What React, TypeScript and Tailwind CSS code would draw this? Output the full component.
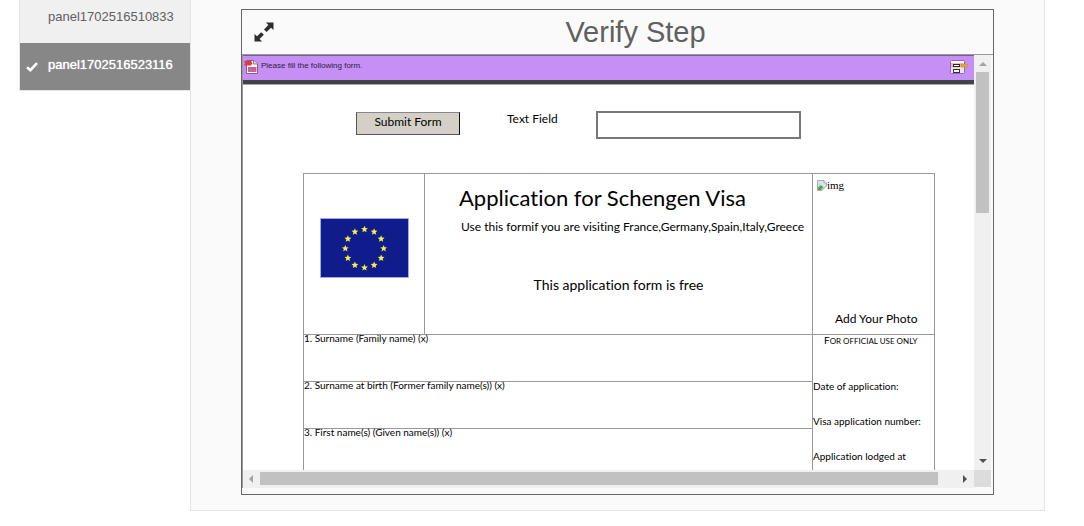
const formFont = "font-['Lato','Open_Sans',sans-serif] [font-variant-ligatures:none]";

const panels = [
  { id: 'panel1702516510833', active: false },
  { id: 'panel1702516523116', active: true },
];

const questions = [
  '1. Surname (Family name) (x)',
  '2. Surname at birth (Former family name(s)) (x)',
  '3. First name(s) (Given name(s)) (x)',
];

const officialFields = ['Date of application:', 'Visa application number:', 'Application lodged at'];

function starPoints(cx: number, cy: number, r: number) {
  return Array.from({ length: 10 }, (_, i) => {
    const radius = i % 2 === 0 ? r : r * 0.45;
    const angle = (Math.PI / 5) * i - Math.PI / 2;
    return `${(cx + radius * Math.cos(angle)).toFixed(2)},${(cy + radius * Math.sin(angle)).toFixed(2)}`;
  }).join(' ');
}

function EuFlag() {
  return (
    <svg viewBox="0 0 89 60" className="h-[60px] w-[89px]" role="img" aria-label="European Union flag">
      <rect x="0.5" y="0.5" width="88" height="59" fill="#111c8c" stroke="#a4aae6" />
      {Array.from({ length: 12 }, (_, i) => {
        const a = (Math.PI / 6) * i;
        return (
          <polygon key={i} points={starPoints(44.5 + 19.2 * Math.sin(a), 30.5 - 19.2 * Math.cos(a), 3.6)} fill="#f4f04a" />
        );
      })}
    </svg>
  );
}

function ExpandIcon() {
  return (
    <svg viewBox="0 0 20 20" className="size-5" fill="#2e2e2e" aria-hidden="true">
      <path d="M12 0.5H19.5V8L17 5.8L12.6 10L10 7.4L14.4 3Z" />
      <path d="M0.5 12L3 14.2L7.2 10.2L9.8 12.8L5.6 17L8 19.5H0.5Z" />
    </svg>
  );
}

function CheckIcon() {
  return (
    <svg viewBox="0 0 12 10" className="h-[10px] w-3" fill="none" stroke="#fff" strokeWidth="2.6" aria-hidden="true">
      <path d="M1 5.2L4.4 8.2L11 1.2" />
    </svg>
  );
}

function PdfIcon() {
  return (
    <svg viewBox="0 0 15 15" className="size-[15px] shrink-0" aria-hidden="true">
      <path d="M2.5 1.5H10L13.5 5V14.5H2.5Z" fill="#fbf3fb" stroke="#86607c" />
      <path d="M9.5 1.5V5H13.5" fill="#e3dbe8" stroke="#86607c" strokeWidth="0.8" />
      <path d="M0 2H7L8.5 4.3L7 6.5H0L1 4.2Z" fill="#dc3c48" />
      <rect x="4.5" y="8.5" width="7.5" height="4" fill="#d0609c" stroke="#b04a80" strokeWidth="0.7" />
    </svg>
  );
}

function HighlightFieldsIcon() {
  return (
    <svg viewBox="0 0 18 16" className="h-4 w-[18px]" aria-hidden="true">
      <rect x="0.5" y="1.5" width="14" height="13" rx="1" fill="#ece4f2" stroke="#9a63b8" />
      <rect x="1" y="2" width="13" height="2.5" fill="#fff" />
      <rect x="1" y="4" width="12" height="4.5" fill="#eeb4bc" />
      <rect x="3.5" y="5.5" width="6" height="2" fill="#fff" stroke="#3a2228" />
      <rect x="3.5" y="10.5" width="6" height="3" fill="#fff" stroke="#333" />
      <rect x="11" y="5" width="6.5" height="3" rx="1" fill="#e5a62e" stroke="#c9852a" strokeWidth="0.5" />
    </svg>
  );
}

function BrokenImage() {
  return (
    <svg viewBox="0 0 10 11" className="h-[11px] w-[10px]" aria-hidden="true">
      <path d="M0.5 0.5H7L9.5 3V6L5 10.5H0.5Z" fill="#d3e3f5" stroke="#a9a9a9" />
      <path d="M1 10V7.5L3.5 5L6.5 7L4 10Z" fill="#55a24a" />
      <path d="M7 0.5V3H9.5" fill="#fff" stroke="#a9a9a9" />
    </svg>
  );
}

function Arrow({ className, d, fill }: { className: string; d: string; fill: string }) {
  return (
    <svg viewBox="0 0 8 8" className={className} fill={fill} aria-hidden="true">
      <path d={d} />
    </svg>
  );
}

export default function App() {
  return (
    <div className="flex h-screen bg-white pb-[15px] pl-[19px] pr-[39px] font-['Liberation_Sans',Arial,sans-serif]">
      <nav className="w-[171px] shrink-0">
        <ul className="border-b border-l border-[#e4e4e4]">
          {panels.map((p) =>
            p.active ? (
              <li key={p.id}>
                <a href="#verify" aria-current="step" className="flex h-[47px] items-center bg-[#878787] pb-1 pl-[6px] text-[13px] text-white">
                  <span className="w-[22px] shrink-0 pt-1">
                    <CheckIcon />
                  </span>
                  <span className="[text-shadow:0_0_1px_#fff]">{p.id}</span>
                </a>
              </li>
            ) : (
              <li key={p.id}>
                <a href="#details" className="flex h-[43px] items-center bg-[#f0f0f0] pb-[10px] pl-7 text-[13px] text-[#606060]">
                  {p.id}
                </a>
              </li>
            ),
          )}
        </ul>
      </nav>

      <main className="flex min-w-0 grow flex-col border-x border-b border-[#e4e4e4] bg-[#fafafa] px-[50px] pb-[15px] pt-[9px]">
        <section className="flex min-h-0 grow flex-col border border-[#666]">
          <header className="flex h-[45px] shrink-0 items-center border-b border-[#999] pl-3">
            <button type="button" aria-label="Toggle full screen" className="w-6 shrink-0">
              <ExpandIcon />
            </button>
            <h1 className="grow text-center text-[29px] leading-[44px] text-[#606060]">Verify Step</h1>
          </header>

          <div className="mb-[6px] mr-[2px] grid min-h-0 grow grid-cols-[minmax(0,1fr)_17px] grid-rows-[minmax(0,1fr)_18px] border-l border-[#999]">
            <div className="flex flex-col overflow-hidden bg-white">
              <div className="flex h-[29px] shrink-0 items-start justify-between border-b-4 border-t border-b-[#454247] border-t-[#75608a] bg-[#c68ff5] pl-px pr-[6px] pt-[3px] shadow-[0_1px_0_#aaa]">
                <div className="flex gap-[2px]">
                  <PdfIcon />
                  <p className="text-[8px] leading-[13px] text-[#302040]">Please fill the following form.</p>
                </div>
                <button type="button" aria-label="Highlight existing fields" className="flex">
                  <HighlightFieldsIcon />
                </button>
              </div>

              <form className={`pl-[60px] pr-[39px] text-black ${formFont}`}>
                <div className="flex items-start pl-[53px] pt-[27px]">
                  <button
                    type="button"
                    className="mt-px h-[23px] w-[104px] border border-b-[#555] border-l-[#555] border-r-[#111] border-t-[#888] bg-[#d4d0c8] pb-1 text-[12px] leading-4"
                  >
                    Submit Form
                  </button>
                  <label htmlFor="text-field" className="ml-[47px] w-[89px] text-[12px] leading-4">
                    Text Field
                  </label>
                  <input id="text-field" type="text" className="h-7 w-[205px] border-2 border-[#777] bg-white px-1 text-[12px]" />
                </div>

                <div className="mt-[34px] grid grid-cols-[121px_minmax(0,1fr)_122px] border-l border-t border-[#999]">
                  <div className="flex h-[161px] items-center justify-center border-b border-r border-[#999] pb-3">
                    <EuFlag />
                  </div>
                  <div className="border-b border-r border-[#999]">
                    <h2 className="pl-[34px] pt-[10px] text-[22px] leading-7">Application for Schengen Visa</h2>
                    <p className="whitespace-nowrap pl-9 pt-[6px] text-[12px] leading-[18px]">
                      Use this formif you are visiting France,Germany,Spain,Italy,Greece
                    </p>
                    <p className="pt-10 text-center text-[14px] leading-[18px]">This application form is free</p>
                  </div>
                  <div className="flex flex-col justify-between border-b border-r border-[#999] pb-[6px]">
                    <div className="flex pl-1 pt-[6px] font-['Liberation_Serif',serif] text-[11px] leading-[10px]">
                      <BrokenImage />
                      <span>img</span>
                    </div>
                    <p className="pl-[22px] text-[12px] leading-[18px]">Add Your Photo</p>
                  </div>

                  <div className="col-span-2 border-r border-[#999] text-[10px] leading-[7px]">
                    {questions.map((q) => (
                      <div key={q} className="h-[47px] border-b border-[#999]">
                        {q}
                      </div>
                    ))}
                  </div>
                  <div className="border-r border-[#999] text-[10px] leading-[10px]">
                    <p className="h-[46px] pl-[11px] text-[8px]">
                      <span className="text-[10px]">F</span>OR OFFICIAL USE ONLY
                    </p>
                    {officialFields.map((f) => (
                      <p key={f} className="h-[35px]">
                        {f}
                      </p>
                    ))}
                  </div>
                </div>
              </form>
            </div>

            <div className="flex flex-col items-center bg-[#f0f0f0] pb-[5px] pt-[6px]">
              <Arrow className="size-2" d="M0 5L4 1L8 5Z" fill="#a3a3a3" />
              <div className="mt-[3px] h-[141px] w-[13px] bg-[#c1c1c1]" />
              <Arrow className="mt-auto size-2" d="M0 2H8L4 6Z" fill="#505050" />
            </div>
            <div className="flex items-center bg-[#f0f0f0] pb-px pl-1 pr-[5px]">
              <Arrow className="size-2" d="M6 0V8L2 4Z" fill="#a3a3a3" />
              <div className="ml-[5px] mr-[23px] h-[13px] grow bg-[#c1c1c1]" />
              <Arrow className="size-2" d="M2 0V8L6 4Z" fill="#505050" />
            </div>
            <div className="mb-px bg-[#dcdcdc]" />
          </div>
        </section>
      </main>
    </div>
  );
}
